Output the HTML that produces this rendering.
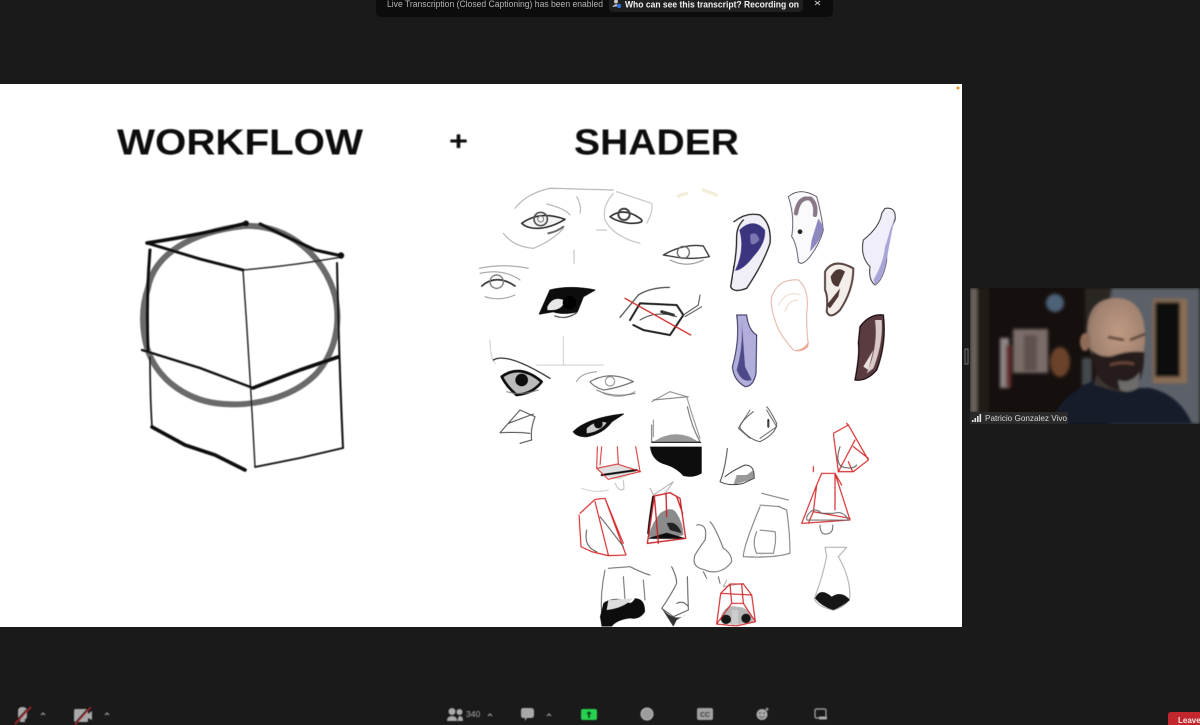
<!DOCTYPE html>
<html><head><meta charset="utf-8"><title>Zoom</title>
<style>
html,body{margin:0;padding:0;width:1200px;height:725px;overflow:hidden;background:#1a1a1a}
svg{display:block;position:absolute;left:0;top:0}
text{font-family:"Liberation Sans",sans-serif}
</style></head><body>
<svg width="1200" height="725" viewBox="0 0 1200 725" xmlns="http://www.w3.org/2000/svg">
<defs>
<filter id="b1" x="-10%" y="-10%" width="120%" height="120%"><feGaussianBlur stdDeviation="0.4"/></filter>
<filter id="b2" x="-10%" y="-10%" width="120%" height="120%"><feGaussianBlur stdDeviation="1"/></filter>
<filter id="b3" x="-20%" y="-20%" width="140%" height="140%"><feGaussianBlur stdDeviation="1.6"/></filter>
<filter id="bz" x="-30%" y="-30%" width="160%" height="160%"><feGaussianBlur stdDeviation="4"/></filter>
<clipPath id="vc"><rect x="970" y="288" width="230" height="136"/></clipPath>
<radialGradient id="skin" cx="55%" cy="45%" r="65%"><stop offset="0" stop-color="#c09a82"/><stop offset=".7" stop-color="#a08270"/><stop offset="1" stop-color="#6e5a50"/></radialGradient>
</defs>
<rect width="1200" height="725" fill="#1a1a1a"/>
<!-- top banner -->
<path d="M376 0H833V11Q833 17 827 17H382Q376 17 376 11Z" fill="#0c0c0c"/>
<text x="387" y="7" font-size="9" fill="#b4b4b4" textLength="216" lengthAdjust="spacingAndGlyphs">Live Transcription (Closed Captioning) has been enabled</text>
<path d="M609 0H803V7Q803 12 798 12H614Q609 12 609 7Z" fill="#1f1f1f"/>
<circle cx="616" cy="1.500" r="2" fill="#c8c8c8"/><path d="M612 7Q616 2 619 6Z" fill="#c8c8c8"/><circle cx="619" cy="6" r="2.200" fill="#2f6fdc"/>
<text x="625" y="7.500" font-size="9.500" font-weight="700" fill="#f2f2f2" textLength="174" lengthAdjust="spacingAndGlyphs">Who can see this transcript? Recording on</text>
<path d="M815 1L820 5M820 1L815 5" stroke="#c8c8c8" stroke-width="1"/>
<!-- slide -->
<rect x="0" y="84" width="962" height="543" fill="#fff"/>
<circle cx="958" cy="88" r="1.500" fill="#f0902a"/>
<g filter="url(#b1)" fill="#0a0a0a" font-weight="700">
<text x="117" y="154.500" font-size="36" textLength="246" lengthAdjust="spacingAndGlyphs">WORKFLOW</text>
<text x="449" y="150" font-size="27" textLength="19" lengthAdjust="spacingAndGlyphs">+</text>
<text x="574" y="154.500" font-size="36" textLength="165" lengthAdjust="spacingAndGlyphs">SHADER</text>
</g>
<!-- cube & circle -->
<g fill="none" stroke-linecap="round" stroke-linejoin="round" filter="url(#b1)">
<path d="M148 288C154 255 190 232 244 226C290 224 325 258 335 296C341 322 336 352 316 374C290 400 250 406 224 404C190 402 158 382 147 348C142 330 141 308 148 288Z" stroke="#6a6a6a" stroke-width="6"/>
<path d="M147 243Q200 235 247 223" stroke="#0a0a0a" stroke-width="3.500"/>
<circle cx="246" cy="223.500" r="3" fill="#0a0a0a"/>
<path d="M260 224L285 236L315 250L342 256" stroke="#0a0a0a" stroke-width="3.200"/>
<circle cx="341" cy="255.500" r="3.200" fill="#0a0a0a"/>
<path d="M147 243L200 259L243 270" stroke="#0a0a0a" stroke-width="2.800"/>
<path d="M243 270Q290 266 342 257" stroke="#0a0a0a" stroke-width="1.300"/>
<path d="M150 250Q146 300 148 350" stroke="#0a0a0a" stroke-width="3"/>
<path d="M150 357Q150 395 152 427" stroke="#0a0a0a" stroke-width="1.600"/>
<path d="M243 270Q250 370 255 467" stroke="#0a0a0a" stroke-width="1.300"/>
<path d="M337 263Q339 360 343 448" stroke="#0a0a0a" stroke-width="2"/>
<path d="M142 350L200 368L253 388" stroke="#0a0a0a" stroke-width="2.300"/>
<path d="M253 388L300 370L338 357" stroke="#0a0a0a" stroke-width="3.600"/>
<path d="M152 427L185 445L215 455L245 470" stroke="#0a0a0a" stroke-width="3.600"/>
<path d="M255 467L300 458L343 448" stroke="#0a0a0a" stroke-width="1.800"/>
</g>
<!-- eyes and ears -->
<g transform="translate(470 180) scale(.33333)" fill="none" stroke="#222" stroke-width="3" stroke-linecap="round" stroke-linejoin="round" filter="url(#b1)">
<path d="M135 85Q170 40 240 25L430 30M100 160Q130 200 190 205Q250 180 280 145M230 72Q285 85 300 105M320 50Q335 75 330 100" stroke="#aaa"/>
<path d="M430 40Q395 80 405 120Q430 170 510 190M440 35L545 70Q550 95 530 130M312 210V250M380 150H410" stroke="#bbb"/>
<path d="M155 130Q210 90 285 118Q240 145 200 145Q170 145 155 130Z" stroke="#333" stroke-width="5" fill="#f4f4f4"/>
<circle cx="212" cy="117" r="20" stroke="#555" stroke-width="5"/><circle cx="212" cy="117" r="9" stroke="#777"/>
<path d="M235 160Q260 155 280 140" stroke="#666" stroke-width="6"/>
<path d="M420 110Q460 80 510 115Q530 130 480 130Q440 125 420 110Z" stroke="#333" stroke-width="5"/><circle cx="462" cy="103" r="17" stroke="#444" stroke-width="6"/>
<path d="M580 225Q640 190 700 198L718 230Q660 240 610 230Z" stroke="#333" stroke-width="4"/><circle cx="640" cy="217" r="18" stroke="#666" stroke-width="4"/><path d="M600 240Q650 265 700 240" stroke="#888"/>
<path d="M625 48L650 40M700 30L740 45" stroke="#f3edd9" stroke-width="10"/>
<path d="M28 265Q100 250 175 265M30 280Q100 265 150 300M45 350Q90 365 135 345" stroke="#999"/>
<path d="M35 318Q80 280 135 318" stroke="#333" stroke-width="5"/><circle cx="80" cy="305" r="20" stroke="#777" stroke-width="4"/>
<path d="M208 402L240 330Q300 315 375 330L340 350L322 395Q280 405 250 395Z" fill="#0a0a0a" stroke="#0a0a0a"/>
<path d="M232 380Q250 345 285 362Q275 395 232 390Z" fill="#e8e8e8" stroke="none"/><circle cx="298" cy="368" r="20" fill="#000" stroke="none"/>
<path d="M255 408Q290 420 320 398" stroke="#555" stroke-width="4"/>
<path d="M450 412L505 345Q540 322 598 322" stroke="#555" stroke-width="4"/>
<path d="M480 420L510 370L620 375L640 405L600 465L520 450L490 435" stroke="#222" stroke-width="6"/>
<path d="M640 405L685 375L690 345M645 410L695 380M510 420Q560 390 620 410" stroke="#444"/>
<path d="M575 395L610 405" stroke="#333" stroke-width="9" stroke-dasharray="3 4"/>
<path d="M465 355L662 465" stroke="#cf2828" stroke-width="4"/>
<path d="M60 480Q60 530 75 550M200 555H400M280 470V555" stroke="#ccc"/>
<path d="M70 540Q110 515 240 595" stroke="#333" stroke-width="4"/>
<path d="M95 590Q150 550 215 605Q190 640 140 645Q110 620 95 590Z" stroke="#111" stroke-width="8" fill="#bbb"/><circle cx="155" cy="600" r="19" fill="#111" stroke="none"/>
<path d="M360 605Q420 570 490 605Q440 625 400 630Q370 620 360 605Z" stroke="#555" stroke-width="3"/><circle cx="420" cy="604" r="14" stroke="#888"/>
<path d="M320 605Q330 580 380 575M400 640Q450 660 495 635" stroke="#999"/>
<path d="M545 665L600 635L650 650L665 700L690 775M550 770L550 720" stroke="#888"/>
<path d="M805 745L840 690M840 775L805 745M890 690L920 740L870 775" stroke="#666"/>
<path d="M895 720L895 740" stroke="#222" stroke-width="6"/>
<!-- ears -->
<path d="M792 125Q830 95 870 105Q905 130 900 190Q880 250 830 325Q790 340 782 320L790 270Q800 220 800 170Q800 140 820 120" stroke="#222" stroke-width="4" fill="#f0eff7"/>
<path d="M808 150Q850 110 885 150Q888 190 850 230Q820 270 795 272Q825 210 808 150Z" fill="#3a367f" stroke="none" filter="url(#b2)"/>
<path d="M840 165Q860 150 868 180Q850 200 842 190Z" fill="#7a76b0" stroke="none" filter="url(#b2)"/>
<path d="M955 50Q990 20 1040 50Q1052 90 1060 150Q1050 190 1020 230Q995 260 985 245Q980 190 965 170Q975 110 955 50Z" stroke="#4a4050" stroke-width="2.500" fill="#fafafc"/>
<path d="M978 100Q985 50 1020 55Q1040 70 1035 105" stroke="#8a7886" stroke-width="13" filter="url(#b2)"/>
<path d="M1020 215Q1055 180 1060 140L1045 115L1025 180Z" fill="#8e88c0" stroke="none" filter="url(#b2)"/><circle cx="990" cy="155" r="7" fill="#222" stroke="none"/>
<path d="M1245 85Q1280 80 1275 120Q1250 170 1250 240Q1240 300 1215 315Q1195 300 1200 260Q1170 230 1180 180Q1230 140 1235 100Z" stroke="#333" fill="#f0eff9"/>
<path d="M1210 300Q1240 250 1245 200L1275 110Q1262 170 1250 240Q1240 300 1215 315Z" fill="#a9a5d8" stroke="none" filter="url(#b2)"/>
<path d="M1065 275Q1090 232 1150 265Q1150 330 1110 390Q1080 420 1070 395Q1075 350 1065 330Z" stroke="#5a4642" stroke-width="6" fill="#f4eeea"/>
<path d="M1082 290Q1100 255 1125 275L1105 320Q1085 320 1082 290ZM1070 375L1110 325L1105 350L1080 385Z" fill="#4d3836" stroke="none" filter="url(#b1)"/>
<path d="M905 350Q925 295 985 300Q1020 330 1010 400Q1010 470 1015 490Q995 520 970 510Q925 460 915 420Q900 380 905 350Z" stroke="#dfb0a2" stroke-width="3"/>
<path d="M975 510Q1000 510 1015 485L1015 500Q995 520 975 510Z" fill="#eba892" stroke="none"/>
<path d="M925 375Q950 330 990 345M945 395Q955 360 985 360" stroke="#eed6cc"/>
<path d="M800 405L830 405Q835 450 860 465L858 580Q850 620 825 620Q790 600 787 560Q810 480 800 405Z" stroke="#2f2b55" fill="#b1aedb"/>
<path d="M815 420L825 560L845 600Q815 610 800 570Q820 500 815 420Z" fill="#4d4988" stroke="none" filter="url(#b2)"/>
<path d="M1170 440Q1200 400 1240 405Q1250 490 1220 570Q1190 605 1155 600Q1170 520 1165 490Z" fill="#5a3a3f" stroke="#1f1114" stroke-width="4"/>
<path d="M1215 420L1235 420Q1240 490 1210 565L1190 580Q1225 500 1215 420Z" fill="#d8c8c8" stroke="none" filter="url(#b1)"/>
<path d="M1180 560L1210 510L1195 570Z" fill="#e9e0dd" stroke="none"/>
</g>
<!-- noses -->
<g transform="translate(480 390) scale(.33333)" fill="none" stroke="#333" stroke-width="3" stroke-linecap="round" stroke-linejoin="round" filter="url(#b1)">
<path d="M80 5Q120 18 175 0M350 0Q400 25 465 10M520 30L625 20" stroke="#777"/>
<path d="M60 128L120 60L165 80Q150 120 155 150L120 160M85 100L160 72M60 128Q110 125 150 130" stroke="#444"/>
<path d="M280 125Q320 85 430 72L395 95Q370 130 320 140Q290 140 280 125Z" fill="#111" stroke="#111"/>
<path d="M320 115Q345 90 380 98Q360 125 320 130Z" fill="#ccc" stroke="none"/><circle cx="355" cy="102" r="13" fill="#111" stroke="none"/>
<path d="M622 50Q635 110 660 155H515V105" stroke="#666"/>
<path d="M520 155Q590 110 655 155Z" fill="#999" stroke="none" filter="url(#b2)"/>
<path d="M515 157H662" stroke="#111" stroke-width="3"/>
<path d="M510 170H665V250Q640 265 610 258Q590 235 560 225Q515 215 510 170Z" fill="#0c0c0c" stroke="none"/>
<path d="M820 65Q775 100 780 115Q810 150 840 155Q890 130 890 100Q870 60 860 50M865 95V110" stroke="#555"/>
<path d="M742 175Q735 240 720 275Q750 290 790 280L822 265Q825 225 795 225Q760 240 735 260" stroke="#444"/>
<path d="M770 255L800 255L820 240L825 265L760 285Z" fill="#555" stroke="none" opacity=".6"/>
<path d="M350 235Q385 270 420 268L480 240L412 222Z" fill="#ccc" stroke="none" opacity=".6"/>
<path d="M365 255L470 240" stroke="#111" stroke-width="6"/>
<path d="M352 170L350 235L385 268L480 245L467 170M350 235L412 222L482 245M365 170L360 225M412 170L415 222" stroke="#d72a2a"/>
<path d="M405 280Q420 310 432 295L430 270" stroke="#bbb"/>
<path d="M305 295Q345 310 385 300" stroke="#ccc"/>
<path d="M300 370L345 328L375 325L438 495L385 497L335 485L303 470L297 375M345 335L385 495M375 325L430 460" stroke="#d72a2a" stroke-width="3.500"/>
<path d="M320 420Q310 470 350 485M360 380Q400 430 430 470" stroke="#555"/>
<path d="M510 295L520 315L580 275L555 310" stroke="#aaa"/>
<path d="M505 440Q560 450 610 435Q610 400 590 370Q575 345 540 370Q515 400 505 440Z" fill="#8b8b8b" stroke="none" filter="url(#b1)"/>
<path d="M508 445L560 430L612 445Z" fill="#0c0c0c" stroke="#0c0c0c"/>
<path d="M560 400Q590 390 605 430L570 420Z" fill="#222" stroke="none"/>
<path d="M520 320Q510 380 505 430" stroke="#111" stroke-width="7"/>
<path d="M502 460L523 318L570 308L600 325L617 445ZM523 318L535 460M558 310L560 380M590 320L608 370" stroke="#c92428" stroke-width="4"/>
<path d="M650 405Q685 400 675 450Q660 470 645 495Q635 525 660 535L690 545Q730 550 755 515Q755 490 730 475Q705 410 690 395M670 545L680 565M715 560L720 580" stroke="#666"/>
<path d="M845 310L925 330M840 345L900 350Q885 345 920 360Q930 430 930 490Q880 505 790 500Q790 470 840 350M830 425Q815 460 830 490L880 490Q890 450 885 425L840 420" stroke="#777"/>
<path d="M1000 245V230M965 400L1010 285L1025 250L1065 250L1110 390ZM985 400L1000 365L1110 385M1000 365L1010 285M1065 250L1065 360M1025 250L1010 285M1065 250L1085 285" stroke="#d72a2a" stroke-width="3.500"/>
<path d="M980 380Q1000 345 1025 370H1060Q1090 360 1105 390H980ZM1020 405Q1020 435 1040 432Q1060 430 1058 405" stroke="#666"/>
<path d="M1100 100L1105 105L1060 130L1075 245L1120 245L1165 210L1105 105M1125 150L1075 245M1120 170L1165 205M1105 215L1118 245" stroke="#d72a2a" stroke-width="3.500"/>
<path d="M1080 170Q1065 215 1085 230Q1120 240 1130 225" stroke="#555"/>
<path d="M1035 472H1100L1075 500Q1110 560 1110 620Q1100 650 1060 660Q1010 650 1003 625Q1025 570 1040 500Z" stroke="#aaa"/>
<path d="M1005 625Q1020 590 1055 620Q1085 600 1110 630Q1085 650 1060 660Q1025 650 1005 625Z" fill="#131313" stroke="none"/>
<path d="M375 540Q360 610 365 680M385 535L450 530Q490 550 510 555M490 570L495 630M430 560L435 630" stroke="#666"/>
<path d="M365 710L360 680L370 640Q390 620 440 630Q450 650 465 625Q495 625 495 665Q480 690 450 685Q410 690 395 710Z" fill="#111" stroke="none"/>
<path d="M385 630L460 625Q430 655 380 660Z" fill="#ddd" stroke="none"/>
<path d="M575 530Q590 560 590 580Q570 620 545 655L580 680L625 660L622 560M590 640Q610 630 625 650" stroke="#555"/>
<path d="M545 655Q585 700 620 672L590 690L580 710Z" fill="#333" stroke="none"/>
<path d="M740 570L730 590L790 580" stroke="#aaa"/>
<path d="M720 690Q730 640 770 650Q810 650 820 695L760 705Z" fill="#999" stroke="none" opacity=".7"/>
<ellipse cx="738" cy="688" rx="15" ry="14" fill="#161616" stroke="none"/><ellipse cx="798" cy="685" rx="14" ry="14" fill="#161616" stroke="none"/>
<path d="M755 660H775V705H755Z" fill="#ccc" stroke="none"/>
<path d="M710 702L722 610L750 582L790 582L815 615L826 695L768 708ZM722 610L815 615M750 582L755 640H790L785 582M755 640L710 702M790 640L826 695" stroke="#d0282a" stroke-width="3.500"/>
</g>
<!-- video -->
<g clip-path="url(#vc)">
<rect x="970" y="288" width="230" height="136" fill="#15100e"/>
<g filter="url(#b3)">
<rect x="1110" y="288" width="90" height="136" fill="#5c6068"/>
<path d="M1085 288H1112L1104 345L1085 335Z" fill="#2a2624"/>
<rect x="970" y="288" width="7" height="125" fill="#6b625c"/>
<rect x="977" y="288" width="12" height="136" fill="#231a16"/>
<circle cx="1055" cy="303" r="9" fill="#4e6277"/>
<rect x="1013" y="329" width="35" height="44" fill="#7a6c68"/>
<rect x="1024" y="335" width="13" height="36" fill="#5e514e"/>
<rect x="1000" y="338" width="9" height="50" fill="#8d8585"/>
<rect x="1006" y="345" width="5" height="42" fill="#6c2d2d"/>
<ellipse cx="1060" cy="362" rx="10" ry="15" fill="#6a422c"/>
<rect x="1082" y="358" width="10" height="28" fill="#45484e"/>
<rect x="1153" y="299" width="34" height="84" fill="#8a6e54"/>
<rect x="1155" y="302" width="25" height="75" fill="#0a0a0a"/>
</g>
<g filter="url(#b2)">
<path d="M1050 424Q1060 395 1095 380L1120 388L1150 388Q1180 395 1192 424Z" fill="#131a2c"/>
<path d="M1094 385L1102 345H1140L1140 380L1120 392Z" fill="#3e3532"/>
<path d="M1087 340Q1084 298 1116 298Q1146 298 1145 340Q1143 368 1134 372Q1115 380 1100 370Q1092 360 1087 340Z" fill="url(#skin)"/>
<path d="M1091 350Q1101 358 1112 356Q1128 350 1144 352Q1145 385 1127 392Q1105 390 1095 372Z" fill="#251e1c"/>
<path d="M1118 380Q1130 385 1140 372L1138 388Q1128 394 1120 390Z" fill="#6d6c6a"/>
<path d="M1110 365Q1122 361 1134 364" stroke="#6e473b" stroke-width="2.500" fill="none"/>
<ellipse cx="1085" cy="342" rx="5" ry="9" fill="#8f6a56"/>
<path d="M1108 337L1124 340M1130 340L1145 334" stroke="#4a3228" stroke-width="2.500"/>
</g>
<rect x="970" y="412" width="98" height="12" fill="#2a2a2a"/>
<path d="M972 420h1.600v2h-1.600zM974.500 418h1.600v4h-1.600zM977 416h1.600v6h-1.600zM979.500 414h1.600v8h-1.600z" fill="#e6e6e6"/>
<text x="985" y="421" font-size="8.500" fill="#d8d8d8" textLength="82" lengthAdjust="spacingAndGlyphs">Patricio Gonzalez Vivo</text>
</g>
<rect x="965" y="349" width="3" height="15" fill="none" stroke="#8a8a8a" stroke-width=".8"/>
<!-- toolbar -->
<g fill="#a9a9a9" filter="url(#b1)">
<path d="M18 711Q18 707 22.500 707Q27 707 27 711V716Q27 720 22.500 720Q18 720 18 716Z"/>
<rect x="20" y="720" width="5" height="2"/>
<path d="M14 724L30 707" stroke="#1a1a1a" stroke-width="2.400"/>
<path d="M15 724L31 707" stroke="#b2282e" stroke-width="1.300"/>
<path d="M41 715L43 713L45 715" fill="none" stroke="#a9a9a9" stroke-width="1"/>
<path d="M74 711Q74 709 76 709H86Q88 709 88 711V721Q88 722 86 722H76Q74 722 74 720Z"/>
<path d="M88 714L92 711V720L88 718Z"/>
<path d="M74 725L90 707" stroke="#1a1a1a" stroke-width="2.400"/>
<path d="M75 725L91 707" stroke="#b2282e" stroke-width="1.300"/>
<path d="M105 715L107 713L109 715" fill="none" stroke="#a9a9a9" stroke-width="1"/>
<circle cx="452" cy="711.500" r="3.500"/><circle cx="459.500" cy="712" r="3"/>
<path d="M447 721Q447 716 452 716Q457 716 457 721Z"/>
<path d="M457.500 721Q458 716 460 716Q463 716 463 721Z"/>
<text x="466" y="717" font-size="8.500" fill="#a9a9a9">340</text>
<path d="M488 716L490 714L492 716" fill="none" stroke="#a9a9a9" stroke-width="1"/>
<path d="M523 708H531Q534 708 534 711V715Q534 718 531 718H527L525 721V718H523Q521 718 521 715V711Q521 708 523 708Z"/>
<path d="M547 716L549 714L551 716" fill="none" stroke="#a9a9a9" stroke-width="1"/>
<rect x="581" y="709" width="16" height="11" rx="2" fill="#25d24f"/>
<path d="M589 711L592 714H590V718H588V714H586Z" fill="#0b2a12"/>
<circle cx="647" cy="714" r="6" fill="#9c9c9c" stroke="#bdbdbd" stroke-width="1"/>
<rect x="697" y="708" width="16" height="12" rx="2" fill="#a0a0a0"/>
<text x="700" y="717" font-size="7" font-weight="700" fill="#1a1a1a">CC</text>
<circle cx="762" cy="714.500" r="5.500"/>
<circle cx="760" cy="713" r=".8" fill="#1a1a1a"/><circle cx="764" cy="713" r=".8" fill="#1a1a1a"/>
<path d="M759.500 716Q762 719 764.500 716" fill="none" stroke="#1a1a1a" stroke-width=".8"/>
<path d="M767 707.500V711M765.300 709.300H768.800" stroke="#a9a9a9" stroke-width="1"/>
<rect x="815" y="709" width="11" height="9" rx="1.500" fill="none" stroke="#a9a9a9" stroke-width="1.200"/>
<rect x="819" y="716.500" width="8" height="3" rx=".8"/>
</g>
<path d="M1168 725V715Q1168 712 1171 712H1200V725Z" fill="#c1272d"/>
<text x="1178" y="723" font-size="8" font-weight="700" fill="#f5e6e6">Leave</text>
</svg>
</body></html>
